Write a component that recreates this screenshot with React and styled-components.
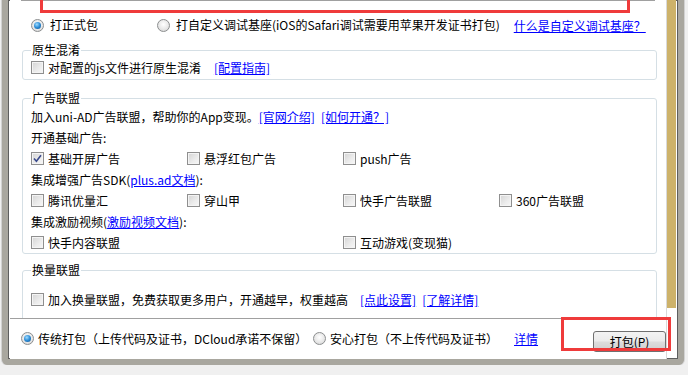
import React from "react";
import styled, { createGlobalStyle } from "styled-components";

const GlobalStyle = createGlobalStyle`
  html, body {
    margin: 0;
    padding: 0;
    background: #f0f0f0;
    font-family: "Noto Sans CJK SC", "Noto Sans", sans-serif;
    font-size: 12px;
    color: #000;
  }
`

const Window = styled.div`
  position: relative;
  box-sizing: border-box;
  margin-left: 2px;
  width: 682px;
  height: 365px;
  border: 6px solid #a9a79f;
  border-top: none;
  border-radius: 0 0 6px 6px;
  box-shadow: inset 0 0 0 1px #5e5e5e, 0 0 0 1px #d2d2d2;
  display: flex;
  background: #ffffff;
`
const Main = styled.div`
  margin-left: 2px;
  width: 656px;
  border-right: 1px solid #d9d9d9;
  display: flex;
  flex-direction: column;
  background: #ffffff;
`
const Side = styled.div`
  width: 9px;
  display: flex;
  flex-direction: column;
`
const GoldBar = styled.div`
  height: 308px;
  background: #cdb26a;
`
const ScrollArea = styled.div`
  height: 318px;
  overflow: hidden;
  display: flex;
  flex-direction: column;
`
const TopBox = styled.div`
  margin-left: 11px;
  width: 632px;
  height: 3px;
  border: 1px solid #a0a0a0;
  border-top: none;
`
const RadioRow = styled.div`
  margin-top: 17px;
  padding-left: 21px;
  height: 14px;
  display: flex;
  align-items: center;
`
const Option = styled.label`
  display: flex;
  align-items: center;
  gap: ${p => p.$gap || 4}px;
  width: ${p => (p.$width ? p.$width + "px" : "auto")};
  white-space: nowrap;
  line-height: 14px;
`
const Radio = styled.span`
  box-sizing: border-box;
  width: 13px;
  height: 13px;
  border-radius: 50%;
  border: 1px solid #8c8e8f;
  background: radial-gradient(circle at 50% 40%, #ffffff 0%, #e8e8e8 55%, #cfcfcf 100%);
  display: flex;
  align-items: center;
  justify-content: center;
  flex-shrink: 0;
  &::after {
    content: "";
    display: ${p => (p.$checked ? "block" : "none")};
    width: 7px;
    height: 7px;
    border-radius: 50%;
    background: radial-gradient(circle at 40% 35%, #9fdcff 0%, #2c8cd6 50%, #0f4f8a 100%);
  }
`
const Box = styled.span`
  box-sizing: border-box;
  width: 13px;
  height: 13px;
  border: 1px solid #8f8f8f;
  background: linear-gradient(135deg, #d4d4d4 0%, #ececec 60%, #f7f7f7 100%);
  box-shadow: inset 0 0 0 1px #f4f4f4;
  display: flex;
  align-items: center;
  justify-content: center;
  flex-shrink: 0;
`
const Link = styled.a`
  color: #0000ff;
  text-decoration: underline;
  cursor: pointer;
  margin-left: ${p => p.$ml || 0}px;
`
const Group = styled.fieldset`
  margin: ${p => p.$mt}px 9px 0 12px;
  padding: ${p => p.$pt || 0}px 8px ${p => p.$pb || 0}px 8px;
  border: 1px solid #d5dfe5;
  border-radius: 3px;
  min-width: 0;
`
const Legend = styled.legend`
  padding: 0 1px;
  line-height: 14px;
`
const Line = styled.div`
  height: 21px;
  display: flex;
  align-items: center;
  white-space: nowrap;
`
const Grid = styled.div`
  height: 21px;
  display: grid;
  grid-template-columns: repeat(4, 156px);
  align-items: center;
`
const Cell = styled.div`
  grid-column: ${p => p.$col || "auto"};
`
const BottomBar = styled.div`
  height: 39px;
  border-top: 1px solid #a0a0a0;
  display: flex;
  align-items: center;
  padding-left: 11px;
`
const PackButton = styled.button`
  margin-left: auto;
  margin-top: 6px;
  width: 73px;
  height: 21px;
  border: 1px solid #707070;
  border-radius: 3px;
  background: linear-gradient(#f3f3f3 0%, #ebebeb 48%, #dddddd 52%, #cfcfcf 100%);
  font-family: "Noto Sans CJK SC", "Noto Sans", sans-serif;
  font-size: 12px;
  color: #000;
  padding: 0;
  u {
    text-decoration: underline;
  }
`
const Mark = styled.div`
  position: absolute;
  box-sizing: border-box;
  border: 3px solid #ef3b3b;
  pointer-events: none;
`

function Check({ checked }) {
  return (
    <Box>
      {checked && (
        <svg width="9" height="9" viewBox="0 0 9 9">
          <path d="M1 4.5 L3.4 7.2 L8 1.2" fill="none" stroke="#3a4a8c" strokeWidth="1.6" />
        </svg>
      )}
    </Box>
  );
}

function CheckOption({ label, checked }) {
  return (
    <Option>
      <Check checked={checked} />
      <span>{label}</span>
    </Option>
  );
}

export default function App() {
  return (
    <>
      <GlobalStyle />
      <Window>
        <Main>
          <ScrollArea>
            <TopBox />
            <RadioRow>
              <Option $gap={6} $width={126}>
                <Radio $checked />
                <span>打正式包</span>
              </Option>
              <Option $gap={6}>
                <Radio />
                <span>打自定义调试基座(iOS的Safari调试需要用苹果开发证书打包)</span>
              </Option>
              <Link $ml={14}>什么是自定义调试基座？</Link>
            </RadioRow>

            <Group $mt={11} $pb={1}>
              <Legend>原生混淆</Legend>
              <Line>
                <CheckOption label="对配置的js文件进行原生混淆" />
                <Link $ml={13}>[配置指南]</Link>
              </Line>
            </Group>

            <Group $mt={11} $pt={1}>
              <Legend>广告联盟</Legend>
              <Line>
                加入uni-AD广告联盟，帮助你的App变现。
                <Link>[官网介绍]</Link>
                <Link $ml={6}>[如何开通？]</Link>
              </Line>
              <Line>开通基础广告:</Line>
              <Grid>
                <CheckOption label="基础开屏广告" checked />
                <CheckOption label="悬浮红包广告" />
                <CheckOption label="push广告" />
              </Grid>
              <Line>
                集成增强广告SDK(<Link>plus.ad文档</Link>):
              </Line>
              <Grid>
                <CheckOption label="腾讯优量汇" />
                <CheckOption label="穿山甲" />
                <CheckOption label="快手广告联盟" />
                <CheckOption label="360广告联盟" />
              </Grid>
              <Line>
                集成激励视频(<Link>激励视频文档</Link>):
              </Line>
              <Grid>
                <Cell $col={1}>
                  <CheckOption label="快手内容联盟" />
                </Cell>
                <Cell $col={3}>
                  <CheckOption label="互动游戏(变现猫)" />
                </Cell>
              </Grid>
            </Group>

            <Group $mt={9} $pt={12} $pb={30}>
              <Legend>换量联盟</Legend>
              <Line>
                <CheckOption label="加入换量联盟，免费获取更多用户，开通越早，权重越高" />
                <Link $ml={12}>[点此设置]</Link>
                <Link $ml={6}>[了解详情]</Link>
              </Line>
            </Group>
          </ScrollArea>

          <BottomBar>
            <Option $width={292}>
              <Radio $checked />
              <span>传统打包（上传代码及证书，DCloud承诺不保留）</span>
            </Option>
            <Option>
              <Radio />
              <span>安心打包（不上传代码及证书）</span>
            </Option>
            <Link $ml={16}>详情</Link>
            <PackButton>
              打包(<u>P</u>)
            </PackButton>
          </BottomBar>
        </Main>
        <Side>
          <GoldBar />
        </Side>
        <Mark style={{ left: 32, top: -10, width: 590, height: 23 }} />
        <Mark style={{ left: 553, top: 317, width: 110, height: 34 }} />
      </Window>
    </>
  );
}
